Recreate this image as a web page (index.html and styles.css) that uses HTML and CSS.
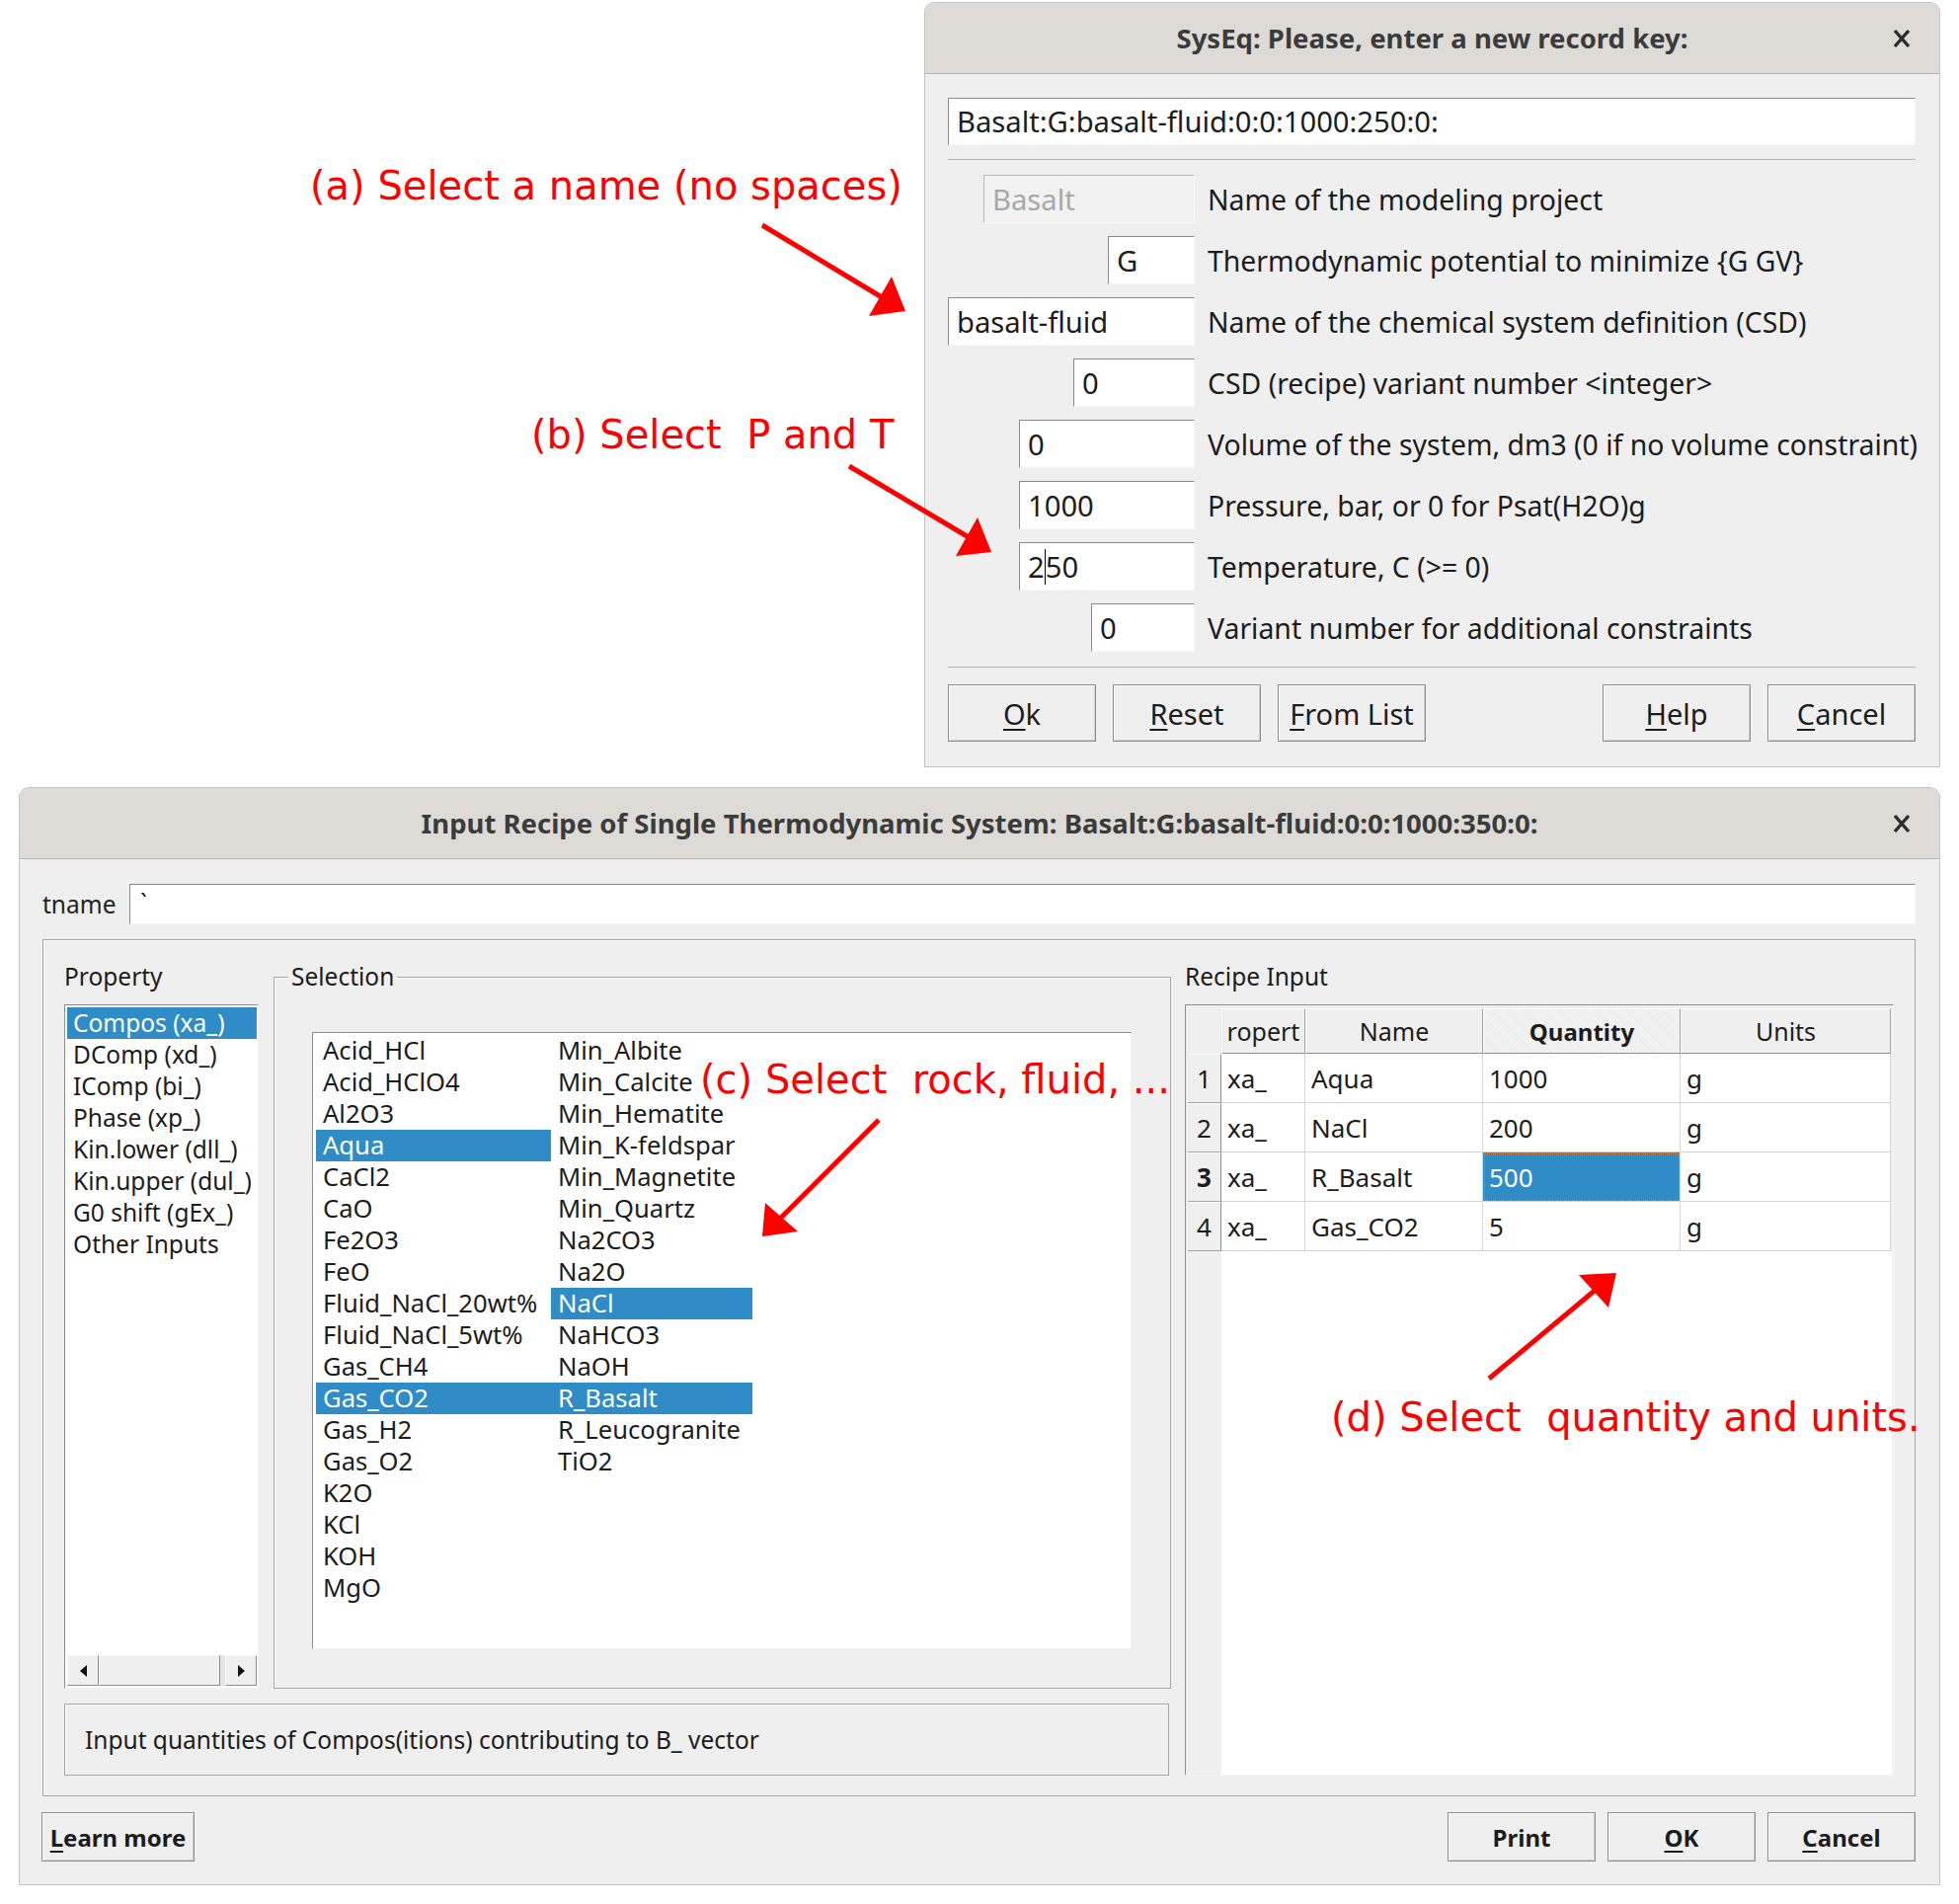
FILE: index.html
```html
<!DOCTYPE html>
<html lang="en">
<head>
<meta charset="utf-8">
<title>SysEq record key and recipe input</title>
<link rel="stylesheet" href="styles.css">
</head>
<body>
<div class="page">

  <section class="dlg dlg-key">
    <header class="titlebar">
      <span class="title">SysEq: Please, enter a new record key:</span>
      <svg class="close" width="18" height="20" viewBox="0 0 18 20"><path d="M2 2 L16 18 M16 2 L2 18" stroke="#2b2b2b" stroke-width="3.4" fill="none"/></svg>
    </header>
    <div class="key-body">
      <div class="field key-field">Basalt:G:basalt-fluid:0:0:1000:250:0:</div>
      <div class="sep sep-1"></div>
      <div class="rows">
        <div class="field disabled f-project">Basalt</div>
        <div class="label">Name of the modeling project</div>
        <div class="field f-pot">G</div>
        <div class="label">Thermodynamic potential to minimize {G GV}</div>
        <div class="field f-csd">basalt-fluid</div>
        <div class="label">Name of the chemical system definition (CSD)</div>
        <div class="field f-var">0</div>
        <div class="label">CSD (recipe) variant number &lt;integer&gt;</div>
        <div class="field f-num">0</div>
        <div class="label">Volume of the system, dm3 (0 if no volume constraint)</div>
        <div class="field f-num">1000</div>
        <div class="label">Pressure, bar, or 0 for Psat(H2O)g</div>
        <div class="field f-num">2<span class="caret"></span>50</div>
        <div class="label">Temperature, C (&gt;= 0)</div>
        <div class="field f-add">0</div>
        <div class="label">Variant number for additional constraints</div>
      </div>
      <div class="sep sep-2"></div>
      <div class="btn-row">
        <button class="btn"><u>O</u>k</button>
        <button class="btn"><u>R</u>eset</button>
        <button class="btn"><u>F</u>rom List</button>
        <button class="btn push"><u>H</u>elp</button>
        <button class="btn"><u>C</u>ancel</button>
      </div>
    </div>
  </section>

  <section class="dlg dlg-recipe">
    <header class="titlebar">
      <span class="title">Input Recipe of Single Thermodynamic System: Basalt:G:basalt-fluid:0:0:1000:350:0:</span>
      <svg class="close" width="18" height="20" viewBox="0 0 18 20"><path d="M2 2 L16 18 M16 2 L2 18" stroke="#2b2b2b" stroke-width="3.4" fill="none"/></svg>
    </header>
    <div class="recipe-body">
      <div class="tname-row">
        <span class="tname-label">tname</span>
        <div class="field tname-field">`</div>
      </div>

      <div class="frame">
        <div class="left-col">
          <div class="top-part">
            <div class="prop-col">
              <div class="caption">Property</div>
              <div class="listbox prop-list">
                <div class="item selected">Compos (xa_)</div>
                <div class="item">DComp (xd_)</div>
                <div class="item">IComp (bi_)</div>
                <div class="item">Phase (xp_)</div>
                <div class="item">Kin.lower (dll_)</div>
                <div class="item">Kin.upper (dul_)</div>
                <div class="item">G0 shift (gEx_)</div>
                <div class="item">Other Inputs</div>
                <div class="hscroll">
                  <div class="sb-btn"><span class="tri-left"></span></div>
                  <div class="sb-slider"></div>
                  <div class="sb-trough"></div>
                  <div class="sb-btn"><span class="tri-right"></span></div>
                </div>
              </div>
            </div>
            <fieldset class="group">
              <legend>Selection</legend>
              <div class="listbox sel-list">
                <div class="sel-grid">
                  <div class="item">Acid_HCl</div>
                  <div class="item">Acid_HClO4</div>
                  <div class="item">Al2O3</div>
                  <div class="item selected">Aqua</div>
                  <div class="item">CaCl2</div>
                  <div class="item">CaO</div>
                  <div class="item">Fe2O3</div>
                  <div class="item">FeO</div>
                  <div class="item">Fluid_NaCl_20wt%</div>
                  <div class="item">Fluid_NaCl_5wt%</div>
                  <div class="item">Gas_CH4</div>
                  <div class="item selected">Gas_CO2</div>
                  <div class="item">Gas_H2</div>
                  <div class="item">Gas_O2</div>
                  <div class="item">K2O</div>
                  <div class="item">KCl</div>
                  <div class="item">KOH</div>
                  <div class="item">MgO</div>
                  <div class="item">Min_Albite</div>
                  <div class="item">Min_Calcite</div>
                  <div class="item">Min_Hematite</div>
                  <div class="item">Min_K-feldspar</div>
                  <div class="item">Min_Magnetite</div>
                  <div class="item">Min_Quartz</div>
                  <div class="item">Na2CO3</div>
                  <div class="item">Na2O</div>
                  <div class="item selected">NaCl</div>
                  <div class="item">NaHCO3</div>
                  <div class="item">NaOH</div>
                  <div class="item selected">R_Basalt</div>
                  <div class="item">R_Leucogranite</div>
                  <div class="item">TiO2</div>
                </div>
              </div>
            </fieldset>
          </div>
          <div class="status">Input quantities of Compos(itions) contributing to B_ vector</div>
        </div>

        <div class="recipe-col">
          <div class="caption">Recipe Input</div>
          <div class="table-frame">
            <div class="trow thead">
              <div class="corner"></div>
              <div class="hcell">ropert</div>
              <div class="hcell">Name</div>
              <div class="hcell current">Quantity</div>
              <div class="hcell">Units</div>
            </div>
            <div class="trow">
              <div class="vcell">1</div>
              <div class="cell">xa_</div><div class="cell">Aqua</div><div class="cell">1000</div><div class="cell">g</div>
            </div>
            <div class="trow">
              <div class="vcell">2</div>
              <div class="cell">xa_</div><div class="cell">NaCl</div><div class="cell">200</div><div class="cell">g</div>
            </div>
            <div class="trow">
              <div class="vcell current">3</div>
              <div class="cell">xa_</div><div class="cell">R_Basalt</div><div class="cell sel">500</div><div class="cell">g</div>
            </div>
            <div class="trow">
              <div class="vcell">4</div>
              <div class="cell">xa_</div><div class="cell">Gas_CO2</div><div class="cell">5</div><div class="cell">g</div>
            </div>
            <div class="tfill">
              <div class="vfill"></div>
              <div class="wfill"></div>
            </div>
          </div>
        </div>
      </div>

      <div class="btn-row btn-row-b">
        <button class="btn btn-b learn"><u>L</u>earn more</button>
        <button class="btn btn-b push">Print</button>
        <button class="btn btn-b"><u>O</u>K</button>
        <button class="btn btn-b"><u>C</u>ancel</button>
      </div>
    </div>
  </section>

  <div class="note note-a">(a) Select a name (no spaces)</div>
  <div class="note note-b">(b) Select  P and T</div>
  <div class="note note-c">(c) Select  rock, fluid, ...</div>
  <div class="note note-d">(d) Select  quantity and units.</div>

  <svg class="arrows" width="1984" height="1928" viewBox="0 0 1984 1928">
    <g stroke="#ff0000" stroke-width="5" fill="none">
      <line x1="772" y1="228" x2="893" y2="301"/>
      <line x1="860" y1="472" x2="981" y2="544"/>
      <line x1="890" y1="1134" x2="790" y2="1234"/>
      <line x1="1508" y1="1396" x2="1616" y2="1306"/>
    </g>
    <g fill="#ff0000">
      <polygon points="917,315 880,320 903,280"/>
      <polygon points="1004,559 968,563 990,524"/>
      <polygon points="772,1252 775,1218 808,1247"/>
      <polygon points="1637,1289 1599,1291 1629,1324"/>
    </g>
  </svg>
</div>
</body>
</html>
```

FILE: styles.css
```css
* { box-sizing: border-box; }

html, body {
  margin: 0;
  padding: 0;
  background: #ffffff;
}

body {
  font-family: "Noto Sans", "Open Sans", sans-serif;
  font-size: 26px;
  color: #232323;
}

.page {
  position: relative;
  width: 1984px;
  height: 1928px;
  padding: 2px 19px 0;
  display: flex;
  flex-direction: column;
  overflow: hidden;
}

/* ---------- dialogs ---------- */
.dlg {
  background: #efefef;
  border: 1px solid #c4c4c4;
  border-radius: 10px 10px 0 0;
  display: flex;
  flex-direction: column;
}

.dlg-key {
  align-self: flex-end;
  width: 1029px;
  height: 775px;
}

.dlg-recipe {
  margin-top: 20px;
  width: 1946px;
  height: 1112px;
  font-size: 24.5px;
}

.titlebar {
  flex: none;
  height: 72px;
  background: #dedbd7;
  border-bottom: 1px solid #b9b6b2;
  border-radius: 9px 9px 0 0;
  display: grid;
  grid-template-columns: 1fr auto 1fr;
  align-items: center;
  font-size: 27.5px;
}

.title {
  grid-column: 2;
  font-weight: 700;
  color: #3b3b3b;
  white-space: nowrap;
}

.close {
  grid-column: 3;
  justify-self: end;
  margin-right: 29px;
}

/* ---------- inputs ---------- */
.field {
  background: #ffffff;
  border: 1px solid;
  border-color: #8a8a8a #f7f7f7 #f7f7f7 #8a8a8a;
  padding: 0 8px;
  display: flex;
  align-items: center;
  white-space: nowrap;
  color: #1c1c1c;
}

.field.disabled {
  background: #f2f2f2;
  border-color: #b9b9b9 #f7f7f7 #f7f7f7 #b9b9b9;
  color: #a8a8a8;
}

.caret {
  display: inline-block;
  width: 1px;
  height: 36px;
  background: #000;
}

/* ---------- key dialog ---------- */
.key-body {
  flex: 1;
  display: flex;
  flex-direction: column;
  padding: 24px 24px 0 23px;
  font-size: 28.4px;
}

.key-body .field {
  font-size: 29.2px;
}

.key-field {
  height: 48px;
}

.sep {
  height: 1px;
  background: #b3b3b3;
}

.sep-1 { margin-top: 14px; }
.sep-2 { margin-top: 15px; }

.rows {
  margin-top: 15px;
  display: grid;
  grid-template-columns: 250px 1fr;
  grid-auto-rows: 49px;
  column-gap: 13px;
  row-gap: 13px;
  align-items: center;
}

.rows .field {
  justify-self: end;
  height: 49px;
}

.f-project { width: 214px; }
.f-pot { width: 88px; }
.f-csd { width: 250px; }
.f-var { width: 123px; }
.f-num { width: 178px; }
.f-add { width: 105px; }

.label {
  white-space: nowrap;
  color: #1c1c1c;
}

/* ---------- buttons ---------- */
.btn-row {
  display: flex;
  gap: 17px;
  margin-top: 17px;
}

.btn {
  width: 150px;
  height: 58px;
  padding: 0;
  background: #efefef;
  border: 1px solid #8e8e8e;
  box-shadow: inset 1px 1px 0 #fcfcfc, inset -1px -1px 0 #cdcdcd;
  font: inherit;
  font-size: 29px;
  color: #1c1c1c;
  display: flex;
  align-items: center;
  justify-content: center;
}

.btn u {
  text-underline-offset: 4px;
  text-decoration-thickness: 2px;
}

.push { margin-left: auto; }

/* ---------- recipe dialog ---------- */
.recipe-body {
  flex: 1;
  display: flex;
  flex-direction: column;
  padding: 25px 24px 0 23px;
}

.tname-row {
  display: flex;
  align-items: center;
  height: 41px;
}

.tname-label {
  width: 88px;
  flex: none;
}

.tname-field {
  flex: 1;
  height: 41px;
  padding-left: 10px;
  align-items: flex-start;
  padding-top: 2px;
}

.frame {
  margin-top: 15px;
  height: 868px;
  border: 1px solid #a6a6a6;
  box-shadow: inset 1px 1px 0 #fbfbfb;
  padding: 23px 20px 20px 21px;
  display: grid;
  grid-template-columns: 1121px 718px;
  column-gap: 14px;
}

.left-col {
  display: flex;
  flex-direction: column;
  gap: 15px;
}

.top-part {
  height: 735px;
  display: flex;
  gap: 15px;
}

.prop-col {
  width: 197px;
  flex: none;
  display: flex;
  flex-direction: column;
  gap: 14px;
}

.caption {
  height: 28px;
  line-height: 28px;
  color: #1c1c1c;
}

.listbox {
  background: #ffffff;
  border: 1px solid;
  border-color: #8e8e8e #f4f4f4 #f4f4f4 #8e8e8e;
}

.prop-list {
  flex: 1;
  padding: 2px 1px 2px 2px;
  display: flex;
  flex-direction: column;
}

.item {
  height: 32px;
  line-height: 32px;
  padding-left: 6px;
  white-space: nowrap;
  color: #1c1c1c;
}

.item.selected {
  background: #308cc6;
  color: #ffffff;
}

.hscroll {
  margin-top: auto;
  height: 31px;
  display: flex;
  background: #efefef;
}

.sb-btn {
  width: 32px;
  flex: none;
  border: 1px solid;
  border-color: #fafafa #8c8c8c #8c8c8c #fafafa;
  background: #efefef;
  display: flex;
  align-items: center;
  justify-content: center;
}

.sb-slider {
  width: 123px;
  flex: none;
  border: 1px solid;
  border-color: #fafafa #8c8c8c #8c8c8c #fafafa;
  background: #efefef;
}

.sb-trough {
  flex: 1;
  background: #e4e4e4;
}

.tri-left, .tri-right {
  width: 0;
  height: 0;
  border-top: 6px solid transparent;
  border-bottom: 6px solid transparent;
}

.tri-left { border-right: 7px solid #111; }
.tri-right { border-left: 7px solid #111; }

.group {
  flex: 1;
  min-width: 0;
  margin: 0;
  padding: 0;
  border: 1px solid #a6a6a6;
  box-shadow: inset 1px 1px 0 #fbfbfb;
}

.group legend {
  margin-left: 14px;
  padding: 0 3px;
  height: 28px;
  line-height: 28px;
  color: #1c1c1c;
}

.sel-list {
  height: 625px;
  margin: 42px 39px 0 38px;
  padding: 2px 0 0 3px;
}

.sel-grid {
  display: grid;
  grid-auto-flow: column;
  grid-template-rows: repeat(18, 32px);
  grid-template-columns: 238px 204px;
  font-size: 25.6px;
}

.sel-grid .item {
  padding-left: 7px;
}

.status {
  height: 73px;
  width: 1119px;
  border: 1px solid #a6a6a6;
  box-shadow: inset 1px 1px 0 #fbfbfb;
  padding-left: 20px;
  display: flex;
  align-items: center;
  color: #1c1c1c;
}

/* ---------- table ---------- */
.recipe-col {
  display: flex;
  flex-direction: column;
  gap: 14px;
}

.table-frame {
  flex: 1;
  border: 1px solid;
  border-color: #8e8e8e #f4f4f4 #f4f4f4 #8e8e8e;
  background: #efefef;
  padding: 3px 1px 0 2px;
  display: flex;
  flex-direction: column;
  font-size: 26px;
}

.trow {
  display: grid;
  grid-template-columns: 34px 85px 180px 200px 213px;
  height: 50px;
}

.thead {
  height: 46px;
  font-size: 25px;
}

.corner {
  background: #efefef;
}

.hcell {
  background: #efefef;
  border-top: 1px solid #fafafa;
  border-left: 1px solid #fafafa;
  border-right: 1px solid #a5a5a5;
  border-bottom: 1px solid #8c8c8c;
  display: flex;
  align-items: center;
  justify-content: center;
  white-space: nowrap;
  overflow: hidden;
  color: #1c1c1c;
}

.hcell.current {
  font-weight: 700;
  font-size: 24px;
  background: repeating-linear-gradient(45deg, #ececec 0 1px, #f2f2f2 1px 3px);
}

.vcell {
  background: #efefef;
  border-top: 1px solid #fafafa;
  border-bottom: 1px solid #a5a5a5;
  border-right: 1px solid #8c8c8c;
  display: flex;
  align-items: center;
  justify-content: center;
  color: #1c1c1c;
}

.vcell.current { font-weight: 700; }

.cell {
  background: #ffffff;
  border-right: 1px solid #d4d4d4;
  border-bottom: 1px solid #d4d4d4;
  padding-left: 6px;
  display: flex;
  align-items: center;
  white-space: nowrap;
  color: #1c1c1c;
}

.cell.sel {
  background: #308cc6;
  color: #ffffff;
  outline: 1px dotted #d8803a;
  outline-offset: -2px;
}

.tfill {
  flex: 1;
  display: grid;
  grid-template-columns: 34px 1fr;
}

.vfill { background: #efefef; }
.wfill { background: #ffffff; }

/* ---------- bottom buttons ---------- */
.btn-row-b {
  margin-top: 16px;
  gap: 12px;
}

.btn-b {
  height: 50px;
  font-weight: 700;
  font-size: 24px;
}

.learn {
  width: 155px;
  margin-left: -1px;
}

/* ---------- annotations ---------- */
.note {
  position: absolute;
  font-family: "DejaVu Sans", sans-serif;
  font-size: 40px;
  line-height: 48px;
  color: #ff0000;
  white-space: pre;
}

.note-a { left: 314px; top: 164px; }
.note-b { left: 538px; top: 416px; }
.note-c { left: 709px; top: 1069px; }
.note-d { left: 1348px; top: 1411px; }

.arrows {
  position: absolute;
  left: 0;
  top: 0;
  pointer-events: none;
}
```
